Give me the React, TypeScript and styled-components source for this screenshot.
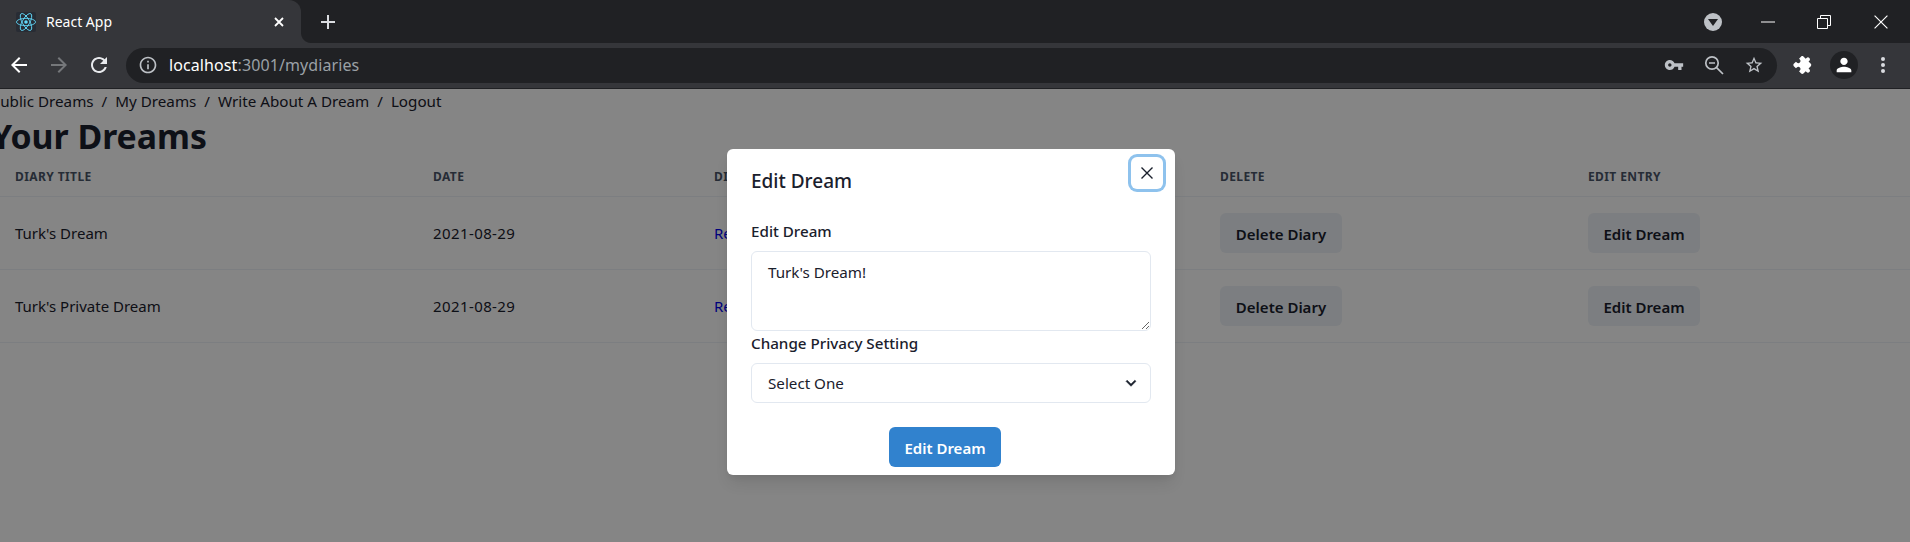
import React from "react";
import styled, { createGlobalStyle } from "styled-components";

const GlobalStyle = createGlobalStyle`
  html, body {
    margin: 0;
    padding: 0;
    width: 100%;
    height: 100%;
    overflow: hidden;
    background: #fff;
    font-family: "Noto Sans", "Open Sans", sans-serif;
    color: #1a202c;
  }
  * { box-sizing: border-box; }
`;

const Window = styled.div`
  display: flex;
  flex-direction: column;
  width: 1910px;
  height: 542px;
  overflow: hidden;
`;

const TabStrip = styled.div`
  display: flex;
  align-items: center;
  height: 43px;
  background: #202124;
  flex: none;
`;

const Tab = styled.div`
  position: relative;
  display: flex;
  align-items: center;
  width: 301px;
  height: 43px;
  padding-left: 16px;
  background: #35363a;
  border-radius: 0 12px 0 0;

  &::after {
    content: "";
    position: absolute;
    right: -10px;
    bottom: 0;
    width: 10px;
    height: 10px;
    background: radial-gradient(circle at 100% 0, #202124 9.5px, #35363a 10.5px);
  }
`;

const Favicon = styled.span`
  display: flex;
  align-items: center;
  justify-content: center;
  width: 20px;
  height: 20px;
  background: #282c34;
  border-radius: 2px;
`;

const TabTitle = styled.span`
  flex: 1;
  margin-left: 10px;
  font-size: 14px;
  color: #fff;
`;

const TabClose = styled.span`
  display: flex;
  width: 16px;
  margin-right: 12px;
`;

const NewTab = styled.span`
  display: flex;
  margin-left: 17px;
`;

const WindowControls = styled.div`
  display: flex;
  align-items: center;
  margin-left: auto;
`;

const Slot = styled.span<{ $w: number }>`
  display: flex;
  align-items: center;
  justify-content: center;
  width: ${(p) => p.$w}px;
  flex: none;
`;

const Toolbar = styled.div`
  display: flex;
  align-items: center;
  height: 46px;
  padding: 0 8px 1px 0;
  background: #35363a;
  border-bottom: 1px solid #202124;
  flex: none;
`;

const AddressBar = styled.div`
  display: flex;
  align-items: center;
  flex: 1;
  height: 35px;
  margin: 0 7px;
  padding: 0 3px 0 12px;
  background: #202124;
  border-radius: 18px;
`;

const Url = styled.span`
  flex: 1;
  margin-left: 11px;
  font-size: 16px;
  letter-spacing: 0.1px;
  color: #fff;

  span {
    color: #9aa0a6;
  }
`;

const Avatar = styled.span`
  display: flex;
  align-items: center;
  justify-content: center;
  width: 28px;
  height: 28px;
  border-radius: 50%;
  background: #202124;
`;

const DropdownDot = styled.span`
  display: flex;
  align-items: center;
  justify-content: center;
  width: 18px;
  height: 18px;
  border-radius: 50%;
  background: #bdc1c6;
`;

const Page = styled.main`
  position: relative;
  flex: 1;
  overflow: hidden;
  background: #fff;
`;

const Content = styled.div`
  width: 1919px;
  margin-left: -9px;
`;

const Breadcrumb = styled.nav`
  display: flex;
  font-size: 15.2px;
  line-height: 24px;
  color: #1a202c;
`;

const Crumb = styled.a`
  color: inherit;
  text-decoration: none;
`;

const Separator = styled.span`
  margin: 0 8px;
`;

const Heading = styled.h1`
  margin: 0;
  padding-top: 2px;
  font-size: 33.8px;
  line-height: 42px;
  font-weight: 700;
`;

const Table = styled.table`
  width: 1928px;
  table-layout: fixed;
  border-collapse: collapse;
`;

const Th = styled.th`
  padding: 12px 24px;
  font-size: 12px;
  line-height: 15px;
  font-weight: 700;
  letter-spacing: 0.4px;
  text-align: left;
  text-transform: uppercase;
  color: #4a5568;
  border-bottom: 1px solid #edf2f7;
`;

const Td = styled.td`
  padding: 16px 24px;
  font-size: 15px;
  line-height: 24px;
  border-bottom: 1px solid #edf2f7;
`;

const DateCell = styled(Td)`
  letter-spacing: 0.4px;
`;

const ReadLink = styled.a`
  color: #0000ee;
  text-decoration: none;
`;

const GrayButton = styled.button<{ $w: number }>`
  width: ${(p) => p.$w}px;
  height: 40px;
  padding: 2px 0 0;
  border: 0;
  border-radius: 6px;
  background: #edf2f7;
  color: #1a202c;
  font: 600 15px "Noto Sans", sans-serif;
`;

const Overlay = styled.div`
  position: absolute;
  inset: 0;
  padding: 60px 0 0 727px;
  background: rgba(0, 0, 0, 0.48);
`;

const Modal = styled.section`
  position: relative;
  width: 448px;
  border-radius: 6px;
  background: #fff;
  box-shadow: 0 10px 15px -3px rgba(0, 0, 0, 0.1), 0 4px 6px -2px rgba(0, 0, 0, 0.05);
`;

const ModalHeader = styled.header`
  padding: 17px 24px 15px;
  font-size: 19px;
  line-height: 30px;
  font-weight: 500;
`;

const CloseButton = styled.button`
  position: absolute;
  top: 8px;
  right: 12px;
  display: flex;
  align-items: center;
  justify-content: center;
  width: 32px;
  height: 32px;
  padding: 0;
  border: 0;
  border-radius: 6px;
  background: #fff;
  box-shadow: 0 0 0 3px rgba(66, 153, 225, 0.6);
`;

const ModalBody = styled.div`
  display: flex;
  flex-direction: column;
  padding: 8px 24px;
`;

const Label = styled.label`
  font-size: 15.2px;
  line-height: 24px;
  font-weight: 500;
`;

const DreamInput = styled.textarea`
  display: block;
  width: 400px;
  height: 80px;
  margin-top: 8px;
  padding: 8px 16px;
  border: 1px solid #e2e8f0;
  border-radius: 6px;
  outline: 0;
  font: 15.2px/24px "Noto Sans", sans-serif;
  color: #1a202c;
`;

const SelectWrap = styled.div`
  position: relative;
  margin-top: 8px;

  svg {
    position: absolute;
    top: 10px;
    right: 10px;
    pointer-events: none;
  }
`;

const PrivacySelect = styled.select`
  display: block;
  width: 400px;
  height: 40px;
  padding: 0 32px 0 16px;
  appearance: none;
  border: 1px solid #e2e8f0;
  border-radius: 6px;
  outline: 0;
  background: #fff;
  font: 15.2px "Noto Sans", sans-serif;
  color: #1a202c;
`;

const ModalFooter = styled.footer`
  display: flex;
  padding: 16px 0 8px 162px;
`;

const PrimaryButton = styled.button`
  width: 112px;
  height: 40px;
  padding: 2px 0 0;
  border: 0;
  border-radius: 6px;
  background: #3182ce;
  color: #fff;
  font: 600 15px "Noto Sans", sans-serif;
`;

const Icon = ({ d, size = 24, color = "#fff" }: { d: string; size?: number; color?: string }) => (
  <svg width={size} height={size} viewBox="0 0 24 24" fill={color}>
    <path d={d} />
  </svg>
);

const ICONS = {
  back: "M20 11H7.83l5.59-5.59L12 4l-8 8 8 8 1.41-1.41L7.83 13H20v-2z",
  forward: "M12 4l-1.41 1.41L16.17 11H4v2h12.17l-5.58 5.59L12 20l8-8z",
  reload:
    "M17.65 6.35C16.2 4.9 14.21 4 12 4c-4.42 0-7.99 3.58-7.99 8s3.57 8 7.99 8c3.73 0 6.84-2.55 7.73-6h-2.08c-.82 2.33-3.04 4-5.65 4-3.31 0-6-2.69-6-6s2.69-6 6-6c1.66 0 3.14.69 4.22 1.78L13 11h7V4l-2.35 2.35z",
  info: "M11 7h2v2h-2zm0 4h2v6h-2zm1-9C6.48 2 2 6.48 2 12s4.48 10 10 10 10-4.48 10-10S17.52 2 12 2zm0 18c-4.41 0-8-3.59-8-8s3.59-8 8-8 8 3.59 8 8-3.59 8-8 8z",
  key: "M12.65 10C11.83 7.67 9.61 6 7 6c-3.31 0-6 2.69-6 6s2.69 6 6 6c2.61 0 4.83-1.67 5.65-4H17v4h4v-4h2v-4H12.65zM7 14c-1.1 0-2-.9-2-2s.9-2 2-2 2 .9 2 2-.9 2-2 2z",
  star: "M22 9.24l-7.19-.62L12 2 9.19 8.63 2 9.24l5.46 4.73L5.82 21 12 17.27 18.18 21l-1.63-7.03L22 9.24zM12 15.4l-3.76 2.27 1-4.28-3.32-2.88 4.38-.38L12 6.1l1.71 4.04 4.38.38-3.32 2.88 1 4.28L12 15.4z",
  person:
    "M12 12c2.21 0 4-1.79 4-4s-1.79-4-4-4-4 1.79-4 4 1.79 4 4 4zm0 2c-2.67 0-8 1.34-8 4v2h16v-2c0-2.66-5.33-4-8-4z",
};

const ReactLogo = () => (
  <svg width="20" height="20" viewBox="-11.5 -10.2 23 20.4" fill="none" stroke="#61dafb" strokeWidth="1">
    <circle r="2.05" fill="#61dafb" stroke="none" />
    <ellipse rx="11" ry="4.2" />
    <ellipse rx="11" ry="4.2" transform="rotate(60)" />
    <ellipse rx="11" ry="4.2" transform="rotate(120)" />
  </svg>
);

const Puzzle = () => (
  <svg width="24" height="24" viewBox="0 0 24 24" fill="#fff">
    <path
      transform="rotate(45 12 12) translate(2.4 2.4) scale(.8)"
      d="M20.5 11H19V7c0-1.1-.9-2-2-2h-4V3.5C13 2.12 11.88 1 10.5 1S8 2.12 8 3.5V5H4c-1.1 0-1.99.9-1.99 2v3.8H3.5c1.49 0 2.7 1.21 2.7 2.7s-1.21 2.7-2.7 2.7H2V20c0 1.1.9 2 2 2h3.8v-1.5c0-1.49 1.21-2.7 2.7-2.7 1.49 0 2.7 1.21 2.7 2.7V22H17c1.1 0 2-.9 2-2v-4h1.5c1.38 0 2.5-1.12 2.5-2.5S21.88 11 20.5 11z"
    />
  </svg>
);

const ZoomOut = () => (
  <svg width="20" height="20" viewBox="0 0 20 20" fill="none" stroke="#bdc1c6" strokeWidth="1.7">
    <circle cx="8" cy="8" r="6.2" />
    <path d="M12.6 12.6L19 19M5 8h6" />
  </svg>
);

const Dots = () => (
  <svg width="24" height="24" viewBox="0 0 24 24" fill="#dadce0">
    <circle cx="12" cy="6" r="2" />
    <circle cx="12" cy="12" r="2" />
    <circle cx="12" cy="18" r="2" />
  </svg>
);

const CrossLines = ({ size, color, width }: { size: number; color: string; width: number }) => (
  <svg width={size} height={size} viewBox="0 0 12 12" stroke={color} strokeWidth={width} fill="none">
    <path d="M.5.5l11 11M11.5.5l-11 11" />
  </svg>
);

const Chevron = () => (
  <svg width="20" height="20" viewBox="0 0 24 24" fill="#1a202c" stroke="#1a202c" strokeWidth=".6">
    <path d="M16.59 8.59L12 13.17 7.41 8.59 6 10l6 6 6-6z" />
  </svg>
);

const rows = ["Turk's Dream", "Turk's Private Dream"];
const columns = [
  { title: "Diary Title", width: 418 },
  { title: "Date", width: 281 },
  { title: "Diary Entry", width: 506 },
  { title: "Delete", width: 368 },
  { title: "Edit Entry", width: 355 },
];

export default function App() {
  return (
    <Window>
      <GlobalStyle />
      <TabStrip>
        <Tab>
          <Favicon>
            <ReactLogo />
          </Favicon>
          <TabTitle>React App</TabTitle>
          <TabClose>
            <svg width="12" height="12" viewBox="0 0 12 12" stroke="#fff" strokeWidth="1.8" fill="none">
              <path d="M2 2l8 8M10 2l-8 8" />
            </svg>
          </TabClose>
        </Tab>
        <NewTab>
          <svg width="20" height="20" viewBox="0 0 20 20" fill="#dadce0">
            <path d="M9 3h2v6h6v2h-6v6H9v-6H3V9h6z" />
          </svg>
        </NewTab>
        <WindowControls>
          <Slot $w={40}>
            <DropdownDot>
              <svg width="10" height="8" viewBox="0 0 10 8" fill="#202124">
                <path d="M0 1h10L5 8z" />
              </svg>
            </DropdownDot>
          </Slot>
          <Slot $w={7} />
          <Slot $w={56}>
            <svg width="14" height="2" viewBox="0 0 14 2" fill="#fff">
              <path d="M0 .5h14v1H0z" />
            </svg>
          </Slot>
          <Slot $w={56}>
            <svg width="14" height="14" viewBox="0 0 14 14" stroke="#fff" fill="none">
              <path d="M.5 3.5h10v10H.5zM3.5 3V.5h10v10H11" />
            </svg>
          </Slot>
          <Slot $w={58}>
            <CrossLines size={14} color="#fff" width={1} />
          </Slot>
        </WindowControls>
      </TabStrip>
      <Toolbar>
        <Slot $w={38}>
          <Icon d={ICONS.back} />
        </Slot>
        <Slot $w={41}>
          <Icon d={ICONS.forward} color="#75777a" />
        </Slot>
        <Slot $w={40}>
          <Icon d={ICONS.reload} color="#e8eaed" />
        </Slot>
        <AddressBar>
          <Icon d={ICONS.info} size={20} color="#bdc1c6" />
          <Url>
            localhost<span>:3001/mydiaries</span>
          </Url>
          <Slot $w={40}>
            <Icon d={ICONS.key} size={20} color="#bdc1c6" />
          </Slot>
          <Slot $w={40}>
            <ZoomOut />
          </Slot>
          <Slot $w={40}>
            <Icon d={ICONS.star} size={20} color="#bdc1c6" />
          </Slot>
        </AddressBar>
        <Slot $w={40}>
          <Puzzle />
        </Slot>
        <Slot $w={40}>
          <Avatar>
            <Icon d={ICONS.person} size={22} />
          </Avatar>
        </Slot>
        <Slot $w={38}>
          <Dots />
        </Slot>
      </Toolbar>
      <Page>
        <Content>
          <Breadcrumb>
            <Crumb href="#">Public Dreams</Crumb>
            <Separator>/</Separator>
            <Crumb href="#">My Dreams</Crumb>
            <Separator>/</Separator>
            <Crumb href="#">Write About A Dream</Crumb>
            <Separator>/</Separator>
            <Crumb href="#">Logout</Crumb>
          </Breadcrumb>
          <Heading>Your Dreams</Heading>
          <Table>
            <colgroup>
              {columns.map((c) => (
                <col key={c.title} width={c.width} />
              ))}
            </colgroup>
            <thead>
              <tr>
                {columns.map((c) => (
                  <Th key={c.title}>{c.title}</Th>
                ))}
              </tr>
            </thead>
            <tbody>
              {rows.map((title) => (
                <tr key={title}>
                  <Td>{title}</Td>
                  <DateCell>2021-08-29</DateCell>
                  <Td>
                    <ReadLink href="#">Read Dream</ReadLink>
                  </Td>
                  <Td>
                    <GrayButton $w={122}>Delete Diary</GrayButton>
                  </Td>
                  <Td>
                    <GrayButton $w={112}>Edit Dream</GrayButton>
                  </Td>
                </tr>
              ))}
            </tbody>
          </Table>
        </Content>
        <Overlay>
          <Modal>
            <ModalHeader>Edit Dream</ModalHeader>
            <CloseButton aria-label="Close">
              <CrossLines size={12} color="#1a202c" width={1.4} />
            </CloseButton>
            <ModalBody>
              <Label>Edit Dream</Label>
              <DreamInput defaultValue="Turk's Dream!" />
              <Label>Change Privacy Setting</Label>
              <SelectWrap>
                <PrivacySelect>
                  <option>Select One</option>
                </PrivacySelect>
                <Chevron />
              </SelectWrap>
            </ModalBody>
            <ModalFooter>
              <PrimaryButton>Edit Dream</PrimaryButton>
            </ModalFooter>
          </Modal>
        </Overlay>
      </Page>
    </Window>
  );
}
